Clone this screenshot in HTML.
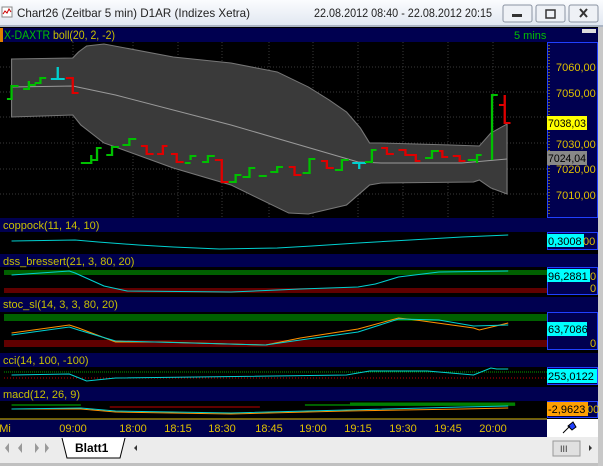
<!DOCTYPE html>
<html><head><style>
body{margin:0;width:603px;height:466px;overflow:hidden;background:#d4d0c8;font-family:"Liberation Sans",sans-serif;}
svg{display:block}
text{font-family:"Liberation Sans",sans-serif}
</style></head><body>
<svg width="603" height="466" viewBox="0 0 603 466" xmlns="http://www.w3.org/2000/svg">
<defs><linearGradient id="tb" x1="0" y1="0" x2="0" y2="1"><stop offset="0" stop-color="#fbfcfe"/><stop offset="1" stop-color="#dfe6f0"/></linearGradient></defs>
<rect x="0" y="0" width="603" height="27" fill="url(#tb)"/>
<rect x="0" y="25" width="603" height="2" fill="#aab4c4"/>
<rect x="2" y="7" width="10" height="10" fill="#fff" stroke="#888"/><path d="M3 14 l2-3 2 2 2-4 2 3" stroke="#c00" fill="none"/>
<text x="17" y="17" font-size="12" fill="#222" textLength="233" lengthAdjust="spacingAndGlyphs">Chart26 (Zeitbar 5 min)  D1AR (Indizes Xetra)</text>
<text x="314" y="17" font-size="12" fill="#222" textLength="178" lengthAdjust="spacingAndGlyphs">22.08.2012 08:40 - 22.08.2012 20:15</text>
<g fill="#eef1f6" stroke="#8a93a2"><rect x="503" y="5" width="29" height="17" rx="2"/><rect x="536" y="5" width="29" height="17" rx="2"/><rect x="569" y="5" width="29" height="17" rx="2"/></g>
<rect x="512" y="14" width="10" height="3" fill="#333"/><rect x="546" y="10" width="9" height="8" fill="none" stroke="#333" stroke-width="1.5"/>
<path d="M580 9l7 8M587 9l-7 8" stroke="#333" stroke-width="2"/>
<rect x="0" y="27" width="598" height="439" fill="#000"/>
<rect x="598" y="27" width="5" height="439" fill="#c8c8c8"/>
<rect x="0" y="28" width="598" height="14" fill="#000050"/>
<rect x="0" y="28" width="3" height="14" fill="#e08000"/>
<text x="4" y="39" font-size="12" textLength="111" lengthAdjust="spacingAndGlyphs"><tspan fill="#00c000">X-DAXTR</tspan><tspan fill="#c8c000"> boll(20, 2, -2)</tspan></text>
<text x="514" y="39" font-size="11" fill="#00c000">5 mins</text>
<rect x="582" y="29" width="14" height="4" fill="#ddd"/>
<g stroke="#3a3a3a" stroke-dasharray="1,2">
<path d="M73 42V218M133 42V218M178 42V218M222 42V218M269 42V218M313 42V218M358 42V218M403 42V218M448 42V218M493 42V218"/>
<path d="M0 67H547M0 92H547M0 117H547M0 143H547M0 169H547M0 194H547"/>
</g>
<g transform="scale(1.155,1)">
<polygon points="10,59 63,58 68,52 75,46 90,44 150,57 200,63 240,72 267,87 285,100 300,112 312,128 320,143 330,143 390,145 415,146 425,133 439,124 439,194 425,188 415,180 410,182 330,183 320,185 300,205 267,214 250,213 200,185 150,168 100,147 90,143 70,125 63,115 10,117" fill="#3a3a3a" stroke="#777"/>
<polyline points="10,87 63,86 100,95 200,125 310,162 330,163 400,163 439,159" fill="none" stroke="#999"/>
<g fill="none" stroke-width="2">
<path stroke="#00c000" d="M6 99h4V86h6M20 89h5v-8M25 85h6M30 83h5v-5h5"/>
<path stroke="#00d0d0" d="M44 79h12M50 79v-12"/>
<path stroke="#e00000" d="M57 78h6v15h5"/>
<path stroke="#00c000" d="M70 163h9v-8M79 160h5v-12h4M92 155h5v-8h6M106 145h6v-6h6"/>
<path stroke="#e00000" d="M122 146h5v8h6M136 154h5v-8h4M148 154h5v8h6"/>
<path stroke="#00c000" d="M160 163h5M165 160v-4h5M175 162h5v-6h6"/>
<path stroke="#e00000" d="M186 160h6v22h6"/>
<path stroke="#00c000" d="M198 182h6v-7h5M210 177h6v-9h5M224 176h7M234 172h6v-5h5"/>
<path stroke="#e00000" d="M250 167h5v8h6"/>
<path stroke="#00c000" d="M262 173h6v-14h5"/>
<path stroke="#e00000" d="M278 161h5v7h6"/>
<path stroke="#00c000" d="M290 170h6v-10h6"/>
<path stroke="#00d0d0" d="M305 163h12M311 163v6"/>
<path stroke="#00c000" d="M316 162h6v-12h4"/>
<path stroke="#e00000" d="M330 148h5v6h6M345 150h6v5h5M355 155h5v6h4M377 151h6v6h5M392 156h6v5h5"/>
<path stroke="#00c000" d="M368 158h6v-7h6M405 160h8M413 163v-8h4"/>
<path stroke="#00c000" d="M426 160V95h5"/>
<path stroke="#e00000" d="M432 105h5v-10M437 105v18h5"/>
</g>
</g>
<rect x="547.5" y="42.5" width="50" height="175" fill="#000050" stroke="#2040ff"/>
<path d="M549 45V216" stroke="#e0c000" stroke-dasharray="1,2"/>
<g font-size="11" fill="#e0c000"><text x="556" y="71">7060,00</text><text x="556" y="97">7050,00</text><text x="556" y="148">7030,00</text><text x="556" y="173">7020,00</text><text x="556" y="199">7010,00</text></g>
<rect x="547" y="116" width="40" height="14" fill="#ffff00"/><text x="548" y="127" font-size="11" fill="#000" textLength="38" lengthAdjust="spacingAndGlyphs">7038,03</text>
<rect x="547" y="151" width="40" height="14" fill="#888"/><text x="548" y="162" font-size="11" fill="#000" textLength="38" lengthAdjust="spacingAndGlyphs">7024,04</text>
<g fill="#000050">
<rect x="0" y="218" width="598" height="14"/><rect x="0" y="254" width="598" height="13"/><rect x="0" y="297" width="598" height="15"/><rect x="0" y="353" width="598" height="14"/><rect x="0" y="387" width="598" height="14"/>
</g>
<g font-size="11" fill="#c8c000">
<text x="3" y="229">coppock(11, 14, 10)</text><text x="3" y="265">dss_bressert(21, 3, 80, 20)</text><text x="3" y="308">stoc_sl(14, 3, 3, 80, 20)</text><text x="3" y="364">cci(14, 100, -100)</text><text x="3" y="398">macd(12, 26, 9)</text>
</g>
<g fill="#000050" stroke="#2040ff"><rect x="547.5" y="232.5" width="50" height="17"/><rect x="547.5" y="267.5" width="50" height="27"/><rect x="547.5" y="312.5" width="50" height="37"/><rect x="547.5" y="367.5" width="50" height="17"/><rect x="547.5" y="401.5" width="50" height="16"/></g>
<rect x="4" y="270" width="543" height="5" fill="#006000"/><rect x="4" y="288" width="543" height="5" fill="#600000"/>
<rect x="4" y="314" width="543" height="7" fill="#006000"/><rect x="4" y="340" width="543" height="7" fill="#600000"/>
<path d="M4 372H547" stroke="#00a000" stroke-dasharray="1,1"/><path d="M4 378H547" stroke="#c00000" stroke-dasharray="1,2"/>
<g transform="scale(1.155,1)" fill="none">
<polyline points="10,241 65,240 85,242 120,245 150,247 190,249 240,248 270,246 310,243 355,240 400,237 440,235" stroke="#00d0d0"/>
<polyline points="10,275 60,271 65,273 90,286 110,291 200,292 260,289 310,287 325,284 345,277 380,272 440,271" stroke="#00d0d0"/>
<polyline points="10,333 60,325 68,328 100,342 140,342 230,345 260,338 310,329 345,318 360,320 410,328 415,330 440,323" stroke="#ff9000"/>
<polyline points="10,335 60,327 68,330 100,341 230,345 260,340 310,332 345,319 380,320 410,326 440,325" stroke="#00d0d0"/>
<polyline points="10,375 60,374 75,381 100,378 300,375 320,371 370,371 410,375 425,368 430,369 440,369" stroke="#00d0d0"/>
<path d="M10 405H70" stroke="#006000" stroke-width="2"/><path d="M95 407H225" stroke="#600000" stroke-width="2"/><path d="M264 405H446" stroke="#006000" stroke-width="2"/><path d="M303 404H446" stroke="#008000" stroke-width="3"/>
<polyline points="10,409 70,409 100,412 200,414 300,411 400,409 440,408" stroke="#ff9000"/>
<polyline points="10,409 70,408 100,411 200,413 300,410 400,407 440,406" stroke="#00d0d0"/>
</g>
<rect x="547" y="234" width="37" height="13" fill="#00ffff"/><text x="548" y="245" font-size="11" fill="#000">0,3008</text><text x="583" y="245" font-size="11" fill="#e0c000">00</text>
<rect x="547" y="269" width="43" height="13" fill="#00ffff"/><text x="548" y="280" font-size="11" fill="#000">96,2881</text><text x="590" y="280" font-size="11" fill="#e0c000">0</text><text x="590" y="292" font-size="11" fill="#e0c000">0</text>
<rect x="547" y="322" width="40" height="14" fill="#00ffff"/><text x="548" y="333" font-size="11" fill="#000">63,7086</text><text x="590" y="347" font-size="11" fill="#e0c000">0</text>
<rect x="547" y="369" width="50" height="14" fill="#00ffff"/><text x="548" y="380" font-size="11" fill="#000">253,0122</text>
<rect x="547" y="402" width="41" height="14" fill="#ffa000"/><text x="548" y="413" font-size="11" fill="#000">-2,9623</text><text x="587" y="413" font-size="11" fill="#e0c000">00</text>
<rect x="0" y="419" width="547" height="18" fill="#000050"/><path d="M0 419H547" stroke="#e0c000"/>
<rect x="547" y="419" width="51" height="18" fill="#fff"/>
<path d="M563 433l7-7M568 426l5-4 3 5-4 3z" stroke="#000" fill="#2040ff"/>
<g font-size="11" fill="#e0c000" text-anchor="middle"><text x="5" y="432">Mi</text><text x="73" y="432">09:00</text><text x="133" y="432">18:00</text><text x="178" y="432">18:15</text><text x="222" y="432">18:30</text><text x="269" y="432">18:45</text><text x="313" y="432">19:00</text><text x="358" y="432">19:15</text><text x="403" y="432">19:30</text><text x="448" y="432">19:45</text><text x="493" y="432">20:00</text></g>
<rect x="0" y="437" width="598" height="29" fill="#ececec"/>
<path d="M62 438l5 20H120l5-20" fill="#fff" stroke="#000"/>
<text x="75" y="452" font-size="12" font-weight="bold" fill="#000">Blatt1</text>
<g fill="#999"><path d="M5 448l4-5v10z"/><path d="M18 448l4-5v10z"/><path d="M35 443l4 5-4 5z"/><path d="M45 443l4 5-4 5z"/></g>
<path d="M134 448l3-3v6z" fill="#333"/>
<rect x="553" y="441" width="27" height="15" fill="#e0e0e0" stroke="#999"/><text x="560" y="452" font-size="9" fill="#333">III</text>
<path d="M589 445l3 3-3 3z" fill="#333"/>
<rect x="0" y="463" width="598" height="3" fill="#c0c0c0"/>
</svg>
</body></html>
